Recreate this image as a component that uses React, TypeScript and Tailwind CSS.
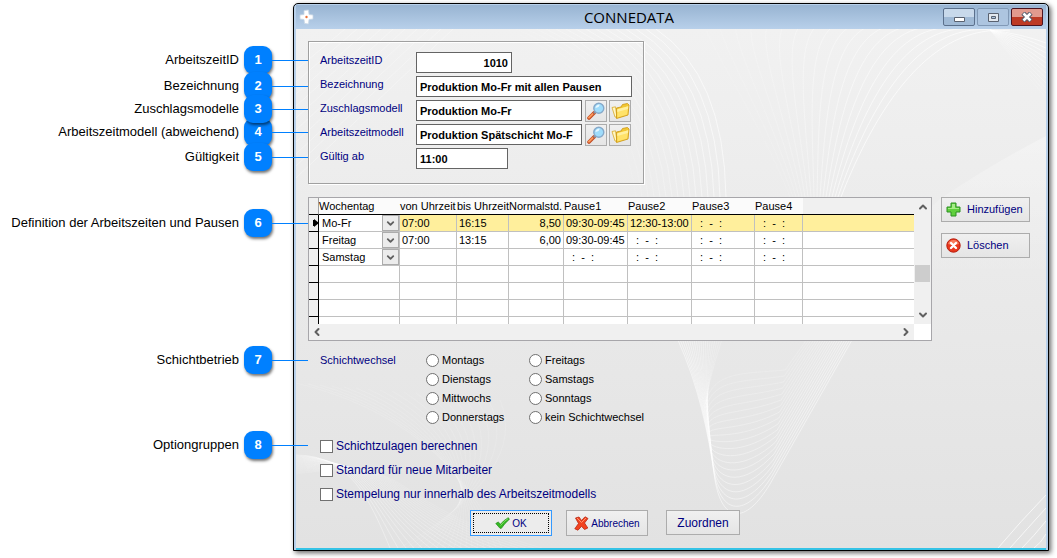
import { useState } from 'react';
import clsx from 'clsx';
import { ChevronDown, ChevronLeft, ChevronRight, ChevronUp } from 'lucide-react';

const CALLOUTS = [
  { nr: 1, label: 'ArbeitszeitID', gap: 'mt-[46px] z-10' },
  { nr: 2, label: 'Bezeichnung', gap: '-mt-[2px] z-20' },
  { nr: 3, label: 'Zuschlagsmodelle', gap: '-mt-[5px] z-30' },
  { nr: 4, label: 'Arbeitszeitmodell (abweichend)', gap: '-mt-[5px] z-10' },
  { nr: 5, label: 'Gültigkeit', gap: '-mt-[3px] z-20' },
  { nr: 6, label: 'Definition der Arbeitszeiten und Pausen', gap: 'mt-[38px]' },
  { nr: 7, label: 'Schichtbetrieb', gap: 'mt-[109px]' },
  { nr: 8, label: 'Optiongruppen', gap: 'mt-[57px]' },
];

const COLUMNS = [
  { label: 'Wochentag', width: 'w-[81px]' },
  { label: 'von Uhrzeit', width: 'w-[57px]' },
  { label: 'bis Uhrzeit', width: 'w-[52px]' },
  { label: 'Normalstd.', width: 'w-[55px]' },
  { label: 'Pause1', width: 'w-[64px]' },
  { label: 'Pause2', width: 'w-[64px]' },
  { label: 'Pause3', width: 'w-[63px]' },
  { label: 'Pause4', width: 'w-[48px]' },
];

const EMPTY = ': - :';

const ROWS = [
  ['Mo-Fr', '07:00', '16:15', '8,50', '09:30-09:45', '12:30-13:00', EMPTY, EMPTY],
  ['Freitag', '07:00', '13:15', '6,00', '09:30-09:45', EMPTY, EMPTY, EMPTY],
  ['Samstag', '', '', '', EMPTY, EMPTY, EMPTY, EMPTY],
  [],
  [],
  [],
  [],
];

const SHIFT_DAYS = [
  'Montags',
  'Freitags',
  'Dienstags',
  'Samstags',
  'Mittwochs',
  'Sonntags',
  'Donnerstags',
  'kein Schichtwechsel',
];

const OPTIONS = [
  'Schichtzulagen berechnen',
  'Standard für neue Mitarbeiter',
  'Stempelung nur innerhalb des Arbeitszeitmodells',
];

const FIELD =
  'h-[21px] border border-[#646464] bg-white px-[3px] text-[11px] font-bold text-black outline-none';
const BUTTON =
  'flex items-center border border-[#acacac] bg-linear-to-b from-[#f0f0f0] to-[#e5e5e5] text-[#000080]';

const range = (n: number) => Array.from({ length: n }, (_, i) => i);

function Waves() {
  return (
    <svg
      className="pointer-events-none absolute inset-0 h-full w-full"
      viewBox="296 29 750 519"
      preserveAspectRatio="none"
      fill="none"
      stroke="#fff"
      aria-hidden="true"
    >
      <defs>
        <linearGradient id="glow" x1="0" y1="0" x2="0" y2="1">
          <stop offset="0" stopColor="#fff" stopOpacity=".3" />
          <stop offset="1" stopColor="#fff" stopOpacity="0" />
        </linearGradient>
      </defs>
      <path d="M1046 136 Q990 165 940 199 L850 280 L1046 280Z" fill="url(#glow)" stroke="none" />
      {range(16).map((i) => (
        <path
          key={`a${i}`}
          d={`M${656 - i * 10} 29 Q${724 - i * 7} 75 ${726 - i * 6} 197`}
          strokeOpacity={0.6 - i * 0.035}
        />
      ))}
      {range(18).map((i) => (
        <path
          key={`b${i}`}
          d={`M${1010 - i * 18} ${31 - i} C${930 - i * 14} 22 ${875 - i * 7} 110 ${841 - i * 3} 197`}
          strokeOpacity={0.65 - i * 0.033}
        />
      ))}
      {range(12).map((i) => (
        <path
          key={`c${i}`}
          d={`M990 30 Q${1022 - i} ${34 + i * 2} 1046 ${43 + i * 5}`}
          strokeOpacity={0.6 - i * 0.04}
        />
      ))}
      {range(20).map((i) => (
        <path
          key={`d${i}`}
          d={`M${678 + i * 2.3} 340 C${698 + i / 2} 385 708 ${430 - i * 2} ${715 - i / 2} ${480 - i * 4} C${722 - i / 2} ${522 - i * 8} 745 ${526 - i * 8} ${770 + i * 0.8} ${484 - i * 6} L${852 - i * 2.4} 340`}
          strokeOpacity={0.5 - i * 0.017}
        />
      ))}
      {range(20).map((i) => (
        <path
          key={`e${i}`}
          d={`M296 ${455 + i} C${350 + i * 4} 455 370 500 ${390 + i * 8} 548`}
          strokeOpacity={0.35 - i * 0.012}
        />
      ))}
      {range(18).map((i) => (
        <path
          key={`f${i}`}
          d={`M${400 + i * 6} 548 Q${530 - i * 5} ${470 - i * 3} ${500 - i * 12} ${400 - i}`}
          strokeOpacity={0.12}
        />
      ))}
      {range(10).map((i) => (
        <path key={`g${i}`} d={`M296 ${70 + i * 12} L${345 + i * 12} 29`} strokeOpacity={0.3} />
      ))}
      {range(4).map((i) => (
        <path key={`h${i}`} d={`M${998 + i * 12} 548 Q${1020 + i * 7} ${522 + i * 7} 1046 ${495 + i * 13}`} strokeOpacity={0.7} />
      ))}
    </svg>
  );
}

function MagnifierIcon() {
  return (
    <svg width="18" height="18" viewBox="0 0 18 18" aria-hidden="true">
      <path d="M2 16 L7 11" stroke="#c24a22" strokeWidth="3.6" strokeLinecap="round" />
      <path d="M2 15.600 L5.500 12.100" stroke="#fb9a5c" strokeWidth="2" strokeLinecap="round" />
      <path d="M6.800 11.200 L8.500 9.500" stroke="#8a8f98" strokeWidth="2" />
      <circle cx="11.800" cy="6.200" r="5" fill="#9fdcfb" stroke="#86a9c9" strokeWidth="1.400" />
      <path d="M8.400 6 Q9 2.800 12.600 2.500 Q12.500 5.500 8.400 6" fill="#e8f8ff" />
    </svg>
  );
}

function FolderIcon() {
  return (
    <svg width="19" height="18" viewBox="0 0 19 18" aria-hidden="true">
      <path d="M1 5.500 L4.500 4.800 L6 15.500 L4 15Z" fill="#fff7c4" stroke="#d9a927" strokeWidth=".8" />
      <path d="M5.500 6 L10 5 L11.500 2.500 L16.500 1.500 L18 3 L17 13 L5.500 16.500Z" fill="#f2c733" stroke="#cf9c1c" strokeWidth=".9" />
      <path d="M6.300 7.300 L17.200 4.300 L16.300 12.400 L6.300 15.500Z" fill="#ffe269" />
      <path d="M6.300 7.300 L17.200 4.300 L17 7 L6.300 10Z" fill="#fff0a0" />
    </svg>
  );
}

function PlusIcon() {
  return (
    <svg width="15" height="15" viewBox="0 0 15 15" aria-hidden="true">
      <path d="M5 1h5v4h4v5h-4v4H5v-4H1V5h4z" fill="#5fd03c" stroke="#2c8f22" />
      <path d="M6 2h3v4h4v1H2V6h4z" fill="#a5ec86" />
    </svg>
  );
}

function DeleteIcon() {
  return (
    <svg width="15" height="15" viewBox="0 0 15 15" aria-hidden="true">
      <circle cx="7.500" cy="7.500" r="6.700" fill="#e8371c" stroke="#b71f10" />
      <path d="M2 6 Q3 2 7.500 2 Q12 2 13 6 Q7 8 2 6" fill="#f77c5c" />
      <path d="M5 5 L10 10 M10 5 L5 10" stroke="#fff" strokeWidth="2.400" strokeLinecap="round" />
    </svg>
  );
}

function CheckIcon() {
  return (
    <svg width="15" height="12" viewBox="0 0 15 12" aria-hidden="true">
      <path d="M.8 6.500 L3.200 5 L5.500 7.200 Q9 3 13.300 .7 L14.400 2.200 Q9.500 6.500 6.400 11.300 L5 11.300Z" fill="#35b824" stroke="#1f8c14" strokeWidth=".7" />
      <path d="M5.600 8.500 Q9 4 13 1.700" stroke="#7fe063" fill="none" />
    </svg>
  );
}

function CancelIcon() {
  return (
    <svg width="15" height="15" viewBox="0 0 15 15" aria-hidden="true">
      <path d="M1.500 2 L5 1 L7.500 4.500 L11 .8 L14 2.500 L10.500 7 L13.800 12 L10.500 13.500 L7.500 10.300 L4 14.200 L.8 12.800 L4.500 7.500Z" fill="#f2431f" stroke="#b92612" strokeWidth=".8" strokeLinejoin="round" />
      <path d="M3 2 L7.500 6.500 L12 2" stroke="#ff9470" fill="none" />
    </svg>
  );
}

function Callouts() {
  return (
    <ol className="relative z-10 w-[293px] shrink-0 text-[13px] text-black">
      {CALLOUTS.map(({ nr, label, gap }) => (
        <li key={nr} className={clsx('relative flex h-7 items-center justify-end gap-[5px] pr-[21px]', gap)}>
          <span className="whitespace-nowrap">{label}</span>
          <span className="flex size-7 items-center justify-center rounded-[9px] bg-[#0080ff] font-bold text-white shadow-[1px_2px_3px_rgba(0,0,0,0.55)]">
            {nr}
          </span>
          <span className="absolute top-[14px] left-[272px] h-px w-9 bg-[#0080ff]" />
        </li>
      ))}
    </ol>
  );
}

function TitleBar() {
  return (
    <header className="flex h-6 items-center bg-linear-to-b from-[#98b4d2] to-[#b8d0ea] pr-[3px] pl-[3px]">
      <svg width="15" height="16" viewBox="0 0 15 16" aria-hidden="true">
        <path d="M5 1.500 L9.500 1 L10 5.500 L14 6 V10 L10 10.500 L9.500 15 L5.500 14.500 L5 10.500 L1 10 V6 L5 5.500Z" fill="#fff" stroke="#c6d5e4" strokeWidth=".8" />
        <circle cx="7.500" cy="8" r="1.200" fill="#e8733a" />
      </svg>
      <h1 className="flex-1 pl-px text-center font-['Open_Sans',sans-serif] text-[15px] leading-6 text-black">CONNEDATA</h1>
      <div className="flex gap-[2px]">
        <button aria-label="Minimieren" className="flex h-[18px] w-8 items-center justify-center rounded-[2px] border border-[#5b708c] bg-linear-to-b from-[#c8d9eb] from-50% to-[#a0bad6] to-50% pt-1">
          <svg width="11" height="5" viewBox="0 0 11 5"><path d="M.5.500h10v4H.5z" fill="#fff" stroke="#5a6270" /></svg>
        </button>
        <button aria-label="Maximieren" className="flex h-[18px] w-8 items-center justify-center rounded-[2px] border border-[#8199b6] bg-[#adc5e0]">
          <svg width="11" height="9" viewBox="0 0 11 9"><path d="M.5.500h10v8H.5z" fill="#e2e8ef" stroke="#5a6270" /><path d="M3.500 3.500h4v2h-4z" fill="#adc5e0" stroke="#5a6270" /></svg>
        </button>
        <button aria-label="Schließen" className="flex h-[18px] w-8 items-center justify-center rounded-[2px] border border-[#4c1420] bg-linear-to-b from-[#e29a8e] from-50% to-[#bd3a25] to-50%">
          <svg width="12" height="10" viewBox="0 0 12 10"><path d="M2 1 L10 9 M10 1 L2 9" stroke="#555b6b" strokeWidth="4.600" /><path d="M2.500 1.500 L9.500 8.500 M9.500 1.500 L2.500 8.500" stroke="#fff" strokeWidth="2.600" /></svg>
        </button>
      </div>
    </header>
  );
}

function LookupButtons({ name }: { name: string }) {
  return (
    <>
      <button aria-label={`${name} suchen`} className={clsx(BUTTON, 'ml-[3px] size-[22px] justify-center')}>
        <MagnifierIcon />
      </button>
      <button aria-label={`${name} öffnen`} className={clsx(BUTTON, 'ml-[2px] size-[22px] justify-center')}>
        <FolderIcon />
      </button>
    </>
  );
}

function MasterData() {
  const row = 'flex h-6 items-start';
  const label = 'w-24 shrink-0 leading-4';
  return (
    <section className="w-[336px] border border-[#a0a0a0] pt-[10px] pr-2 pb-[11px] pl-[11px] text-[11px] text-[#000080] shadow-[inset_1px_1px_0_#fff,1px_1px_0_#fff]">
      <div className={row}>
        <label htmlFor="id" className={label}>ArbeitszeitID</label>
        <input id="id" className={clsx(FIELD, 'w-24 text-right')} defaultValue="1010" />
      </div>
      <div className={row}>
        <label htmlFor="bez" className={label}>Bezeichnung</label>
        <input id="bez" className={clsx(FIELD, 'w-[216px]')} defaultValue="Produktion Mo-Fr mit allen Pausen" />
      </div>
      <div className={row}>
        <label htmlFor="zuschlag" className={label}>Zuschlagsmodell</label>
        <input id="zuschlag" className={clsx(FIELD, 'w-[166px]')} defaultValue="Produktion Mo-Fr" />
        <LookupButtons name="Zuschlagsmodell" />
      </div>
      <div className={row}>
        <label htmlFor="modell" className={label}>Arbeitszeitmodell</label>
        <input id="modell" className={clsx(FIELD, 'w-[166px]')} defaultValue="Produktion Spätschicht Mo-F" />
        <LookupButtons name="Arbeitszeitmodell" />
      </div>
      <div className={row}>
        <label htmlFor="gueltig" className={label}>Gültig ab</label>
        <input id="gueltig" className={clsx(FIELD, 'w-[92px]')} defaultValue="11:00" />
      </div>
    </section>
  );
}

function Schedule() {
  const cell = 'h-[17px] border-r border-b border-[#c0c0c0] whitespace-nowrap';
  return (
    <section className="flex h-36 flex-1 flex-col border border-[#a7a6aa] bg-white text-[11px] leading-4 text-black">
      <div className="flex min-h-0 flex-1">
        <div className="flex-1 overflow-hidden">
          <table className="w-full table-fixed border-separate border-spacing-0">
            <thead>
              <tr>
                <th className="h-[17px] w-[10px] border-r border-b border-r-[#a0a0a0] bg-[#f0f0f0]" />
                {COLUMNS.map((col) => (
                  <th key={col.label} className={clsx('border-b bg-[#fbfbfb] text-left font-normal whitespace-nowrap', col.width)}>
                    {col.label}
                  </th>
                ))}
                <th className="border-b bg-[#f0f0f0]" />
              </tr>
            </thead>
            <tbody>
              {ROWS.map((row, r) => (
                <tr key={r} className={r === 0 ? 'bg-[#ffef9c]' : 'bg-white'}>
                  <td className="border-r border-b border-black bg-[#f0f0f0]">
                    {r === 0 && (
                      <svg width="6" height="8" viewBox="0 0 6 8" className="ml-1"><path d="M0 1h1V0l5 4-5 4V7H0z" /></svg>
                    )}
                  </td>
                  {COLUMNS.map((col, c) => {
                    const value = row[c];
                    if (c === 0) {
                      return (
                        <td key={col.label} className={clsx(cell, 'bg-white')}>
                          {value && (
                            <div className="flex h-4 items-center justify-between pl-[3px]">
                              {value}
                              <button aria-label={`${value} ändern`} className="flex h-4 w-[17px] items-center justify-center border border-[#acacac] bg-[#ececec] text-[#606060]">
                                <ChevronDown size={11} strokeWidth={4} />
                              </button>
                            </div>
                          )}
                        </td>
                      );
                    }
                    return (
                      <td key={col.label} className={clsx(cell, c === 3 ? 'pr-[2px] text-right' : value === EMPTY ? 'pl-2 whitespace-pre' : 'pl-[2px]')}>
                        {value === EMPTY ? ':  -  :' : value}
                      </td>
                    );
                  })}
                  <td className="border-b border-[#c0c0c0]" />
                </tr>
              ))}
            </tbody>
          </table>
        </div>
        <div className="flex w-[17px] shrink-0 flex-col items-center justify-between bg-[#f0f0f0] py-[3px] text-[#606060]">
          <ChevronUp size={12} strokeWidth={4} />
          <span className="mt-6 h-[17px] w-[15px] bg-[#cdcdcd]" />
          <ChevronDown size={12} strokeWidth={4} />
        </div>
      </div>
      <div className="mr-[17px] flex h-4 items-center justify-between bg-[#f0f0f0] px-[2px] text-[#606060]">
        <ChevronLeft size={12} strokeWidth={4} />
        <ChevronRight size={12} strokeWidth={4} />
      </div>
    </section>
  );
}

export default function App() {
  const [shift, setShift] = useState('');

  return (
    <div className="flex bg-white pt-[3px] pr-2 pb-2 font-['Liberation_Sans',Arial,sans-serif]">
      <div className="-mt-[3px] shrink-0">
        <Callouts />
      </div>
      <main className="min-w-0 flex-1 rounded-t-[5px] border border-black bg-[#b8d0ea] px-[2px] pt-px shadow-[2px_2px_5px_rgba(0,0,0,0.6)]">
        <TitleBar />
        <div className="relative border-b-2 border-[#35c3e6] bg-linear-to-b from-[#f1f1f1] to-[#e2e2e2]">
          <Waves />
          <div className="relative pt-3 pr-4 pb-3 pl-3">
            <MasterData />

            <div className="mt-[13px] flex gap-[9px]">
              <Schedule />
              <div className="flex w-[89px] flex-col gap-[11px] text-[11px]">
                <button className={clsx(BUTTON, 'h-[25px] gap-[6px] pl-1')}>
                  <PlusIcon />
                  Hinzufügen
                </button>
                <button className={clsx(BUTTON, 'h-[25px] gap-[6px] pl-1')}>
                  <DeleteIcon />
                  Löschen
                </button>
              </div>
            </div>

            <fieldset className="mt-[10px] flex pl-3 text-[11px]">
              <legend className="float-left w-[106px] leading-[19px] text-[#000080]">Schichtwechsel</legend>
              <div className="grid grid-cols-[103px_auto] text-black">
                {SHIFT_DAYS.map((day) => (
                  <label key={day} className="flex h-[19px] items-center gap-[3px]">
                    <input
                      type="radio"
                      name="shift"
                      checked={shift === day}
                      onChange={() => setShift(day)}
                      className="size-[13px] appearance-none rounded-full border border-[#707070] bg-white checked:border-4"
                    />
                    {day}
                  </label>
                ))}
              </div>
            </fieldset>

            <div className="mt-[7px] pl-3 text-[12px] text-[#000080]">
              {OPTIONS.map((option) => (
                <label key={option} className="flex h-6 items-center gap-[3px]">
                  <input type="checkbox" className="size-[13px] appearance-none border border-[#707070] bg-white checked:bg-[#707070]" />
                  {option}
                </label>
              ))}
            </div>

            <div className="mt-1 flex items-start pl-[162px]">
              <button className="h-[26px] w-[82px] border border-[#3399ff] bg-[#ececec] p-[2px] text-[10px] text-[#000080]">
                <span className="flex h-full items-center justify-center gap-[2px] border border-dotted border-black">
                  <CheckIcon />
                  OK
                </span>
              </button>
              <button className={clsx(BUTTON, 'ml-[14px] h-[26px] w-[82px] justify-center gap-[2px] text-[10px]')}>
                <CancelIcon />
                Abbrechen
              </button>
              <button className={clsx(BUTTON, 'ml-[18px] h-[25px] w-[74px] justify-center text-[12px]')}>
                Zuordnen
              </button>
            </div>
          </div>
        </div>
      </main>
    </div>
  );
}
